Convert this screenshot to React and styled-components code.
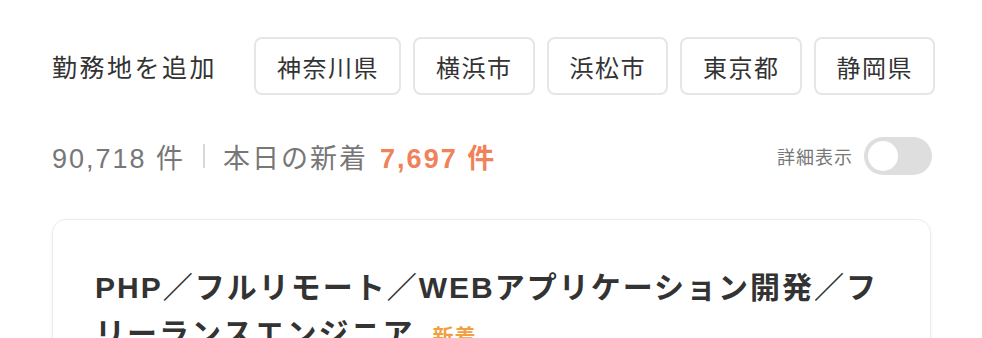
import styled, { createGlobalStyle } from 'styled-components';

const Global = createGlobalStyle`
body{
    margin:0;
    background:#fff;
    font-family:"Liberation Sans","Noto Sans CJK JP",sans-serif;
    color:#333;
}
`;

const areas = ['神奈川県', '横浜市', '浜松市', '東京都', '静岡県'];

export default function App() {
    return <Page>
        <Global />
        <AreaRow>
            <AreaLabel>勤務地を追加</AreaLabel>
            {areas.map((a) => <Chip key={a}>{a}</Chip>)}
        </AreaRow>

        <CountRow>
            <Count>
                <span>90,718 件</span>
                <Divider />
                <span>本日の新着</span>
                <NewCount>7,697 件</NewCount>
            </Count>
            <DetailToggle>
                詳細表示
                <Switch><Knob /></Switch>
            </DetailToggle>
        </CountRow>

        <Card>
            <Title>
                PHP／フルリモート／WEBアプリケーション開発／フリーランスエンジニア
                <NewBadge>新着</NewBadge>
            </Title>
        </Card>
    </Page>
}

const Page = styled.div`
width:883px;
padding:37px 0 0 52px;
`;
const AreaRow = styled.div`
display:flex;
align-items:center;
gap:12px;
`;
const AreaLabel = styled.div`
flex:1;
white-space:nowrap;
font-size:25px;
letter-spacing:2.5px;
color:#333;
`;
const Chip = styled.button`
flex-shrink:0;
white-space:nowrap;
height:58px;
padding:0 20px 0 21px;
border:2px solid #e6e6e6;
border-radius:8px;
background:#fff;
font-family:inherit;
font-size:24px;
letter-spacing:1.5px;
color:#333;
`;
const CountRow = styled.div`
display:flex;
align-items:center;
justify-content:space-between;
margin-top:42px;
height:38px;
`;
const Count = styled.div`
display:flex;
align-items:center;
white-space:nowrap;
font-size:27px;
letter-spacing:2px;
color:#777;
`;
const Divider = styled.span`
width:2px;
height:24px;
background:#d8d8d8;
margin:0 18px 0 18px;
`;
const NewCount = styled.span`
color:#f0825a;
font-weight:bold;
margin-left:12px;
`;
const DetailToggle = styled.div`
display:flex;
align-items:center;
gap:11px;
margin-right:3px;
font-size:18px;
letter-spacing:1px;
color:#777;
`;
const Switch = styled.div`
width:68px;
height:38px;
border-radius:19px;
background:#dedede;
padding:4px;
box-sizing:border-box;
`;
const Knob = styled.div`
width:30px;
height:30px;
border-radius:50%;
background:#fff;
`;
const Card = styled.div`
margin-top:44px;
width:879px;
border:1px solid #ececec;
border-radius:14px;
box-shadow:0 1px 4px rgba(0,0,0,0.04);
padding:45px 42px;
box-sizing:border-box;
`;
const Title = styled.h2`
margin:0;
font-size:30px;
line-height:46px;
font-weight:bold;
letter-spacing:2px;
color:#333;
`;
const NewBadge = styled.span`
font-size:21px;
color:#f0a040;
margin-left:18px;
letter-spacing:1px;
`;
